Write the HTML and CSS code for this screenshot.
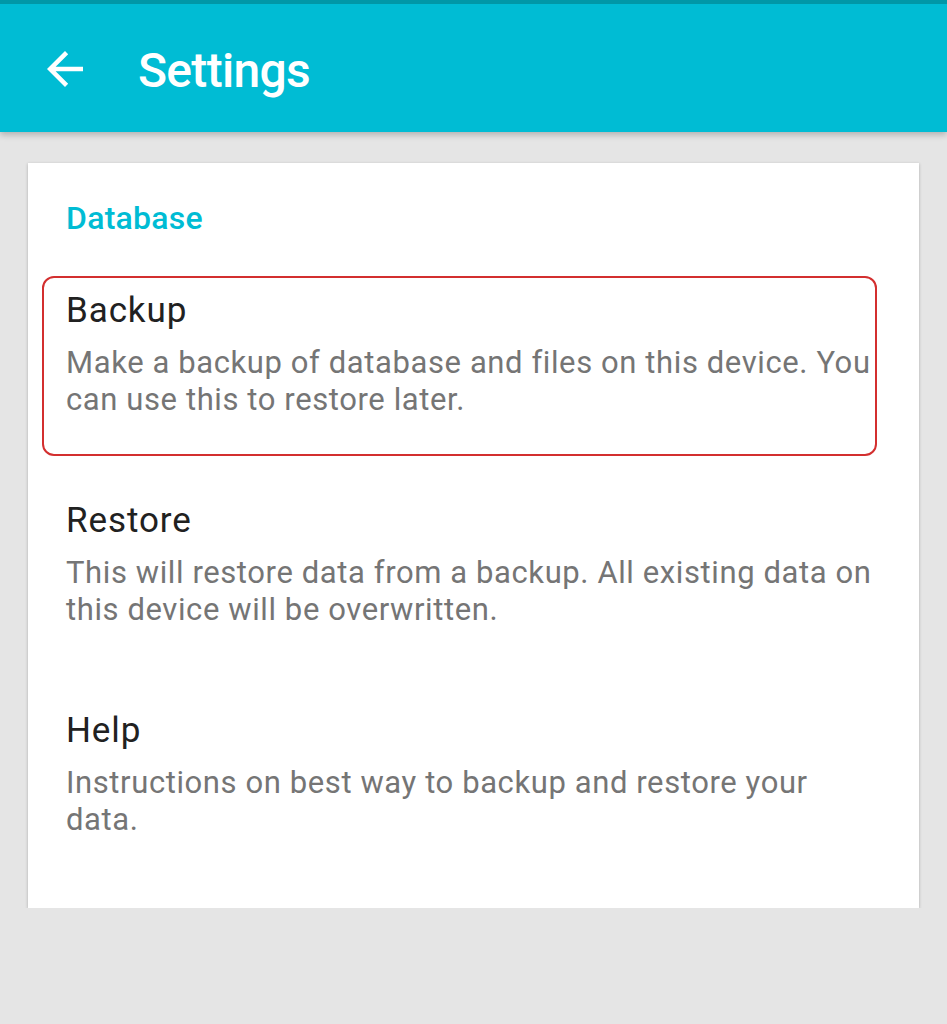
FILE: index.html
```html
<!DOCTYPE html>
<html lang="en">
<head>
    <meta charset="UTF-8">
    <meta name="viewport" content="width=device-width, initial-scale=1.0">
    <title>Settings</title>
    <link rel="stylesheet" href="styles.css">
</head>
<body>
    <div class="toolbar">
        <button class="back" aria-label="Back">
            <svg viewBox="0 0 24 24" width="54" height="54">
                <path fill="#fff" d="M20 11H7.83l5.59-5.59L12 4l-8 8 8 8 1.41-1.41L7.83 13H20v-2z"/>
            </svg>
        </button>
        <h1>Settings</h1>
    </div>

    <div class="card">
        <div class="category">Database</div>

        <div class="pref selected">
            <div class="pref-title">Backup</div>
            <div class="pref-summary">Make a backup of database and files on this device. You can use this to restore later.</div>
        </div>

        <div class="pref">
            <div class="pref-title">Restore</div>
            <div class="pref-summary">This will restore data from a backup. All existing data on this device will be overwritten.</div>
        </div>

        <div class="pref">
            <div class="pref-title">Help</div>
            <div class="pref-summary">Instructions on best way to backup and restore your data.</div>
        </div>
    </div>
</body>
</html>
```

FILE: styles.css
```css
body {
    font-family: Roboto, "Noto Sans", sans-serif;
    background-color: #e5e5e5;
    margin: 0;
    padding: 0;
}

.toolbar {
    display: flex;
    align-items: center;
    height: 128px;
    padding-left: 38px;
    background-color: #00bcd4;
    border-top: 4px solid #0097a7;
    box-shadow: 0 3px 6px rgba(0, 0, 0, 0.22);
    position: relative;
}

.back {
    background: none;
    border: none;
    padding: 0;
    margin-top: 2px;
    width: 54px;
    height: 54px;
}

.back svg {
    display: block;
}

.toolbar h1 {
    margin: 0 0 0 46px;
    padding-top: 6px;
    font-size: 48px;
    line-height: 56px;
    font-weight: 500;
    letter-spacing: -0.7px;
    color: #fff;
}

.card {
    margin: 31px 28px 0;
    background: #fff;
    padding: 35px 0 29px;
    box-shadow: 0 1px 3px rgba(0, 0, 0, 0.25);
}

.category {
    padding: 0 38px;
    margin-bottom: 11px;
    font-size: 32px;
    line-height: 40px;
    font-weight: 500;
    letter-spacing: 0.25px;
    color: #00bcd4;
}

.pref {
    position: relative;
    padding: 40px 38px 41px;
}

.pref-title {
    font-size: 35px;
    line-height: 44px;
    letter-spacing: 0.9px;
    color: #212121;
}

.pref-summary {
    margin-top: 11px;
    font-size: 31px;
    line-height: 37px;
    letter-spacing: 0.6px;
    color: #757575;
}

.pref.selected::after {
    content: "";
    position: absolute;
    top: 27px;
    bottom: 3px;
    left: 14px;
    right: 42px;
    border: 2px solid #d32f2f;
    border-radius: 12px;
}
```
